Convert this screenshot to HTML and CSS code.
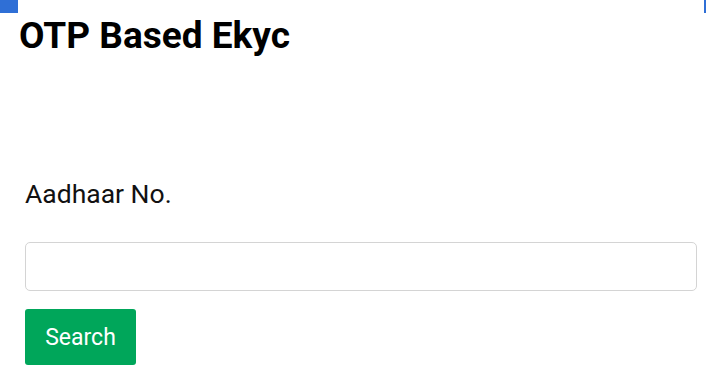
FILE: index.html
```html
<!DOCTYPE html>
<html>
<head>
<meta charset="utf-8">
<link rel="stylesheet" href="styles.css">
</head>
<body>
<span class="mark mark-left"></span>
<span class="mark mark-right"></span>
<div class="page">
  <h1 class="title">OTP Based Ekyc</h1>
  <form class="form">
    <label class="label" for="aadhaar">Aadhaar No.</label>
    <input class="input" id="aadhaar" type="text">
    <button class="btn" type="button">Search</button>
  </form>
</div>
</body>
</html>
```
FILE: styles.css
```css
html, body {
  margin: 0;
  padding: 0;
  background: #fff;
}
body {
  font-family: Roboto, "Liberation Sans", sans-serif;
  color: #000;
  position: relative;
  width: 706px;
  height: 382px;
  overflow: hidden;
}
.mark {
  position: absolute;
  top: 0;
  height: 13px;
  background: #2f6fd6;
}
.mark-left { left: 0; width: 18px; }
.mark-right { right: 0; width: 2px; }
.page {
  padding: 14px 9px 0 19px;
}
.title {
  margin: 0;
  font-size: 37px;
  font-weight: 700;
  line-height: 44px;
}
.form {
  display: flex;
  flex-direction: column;
  align-items: flex-start;
  padding: 120px 0 0 6px;
}
.label {
  font-size: 26.5px;
  line-height: 32px;
  color: #111;
}
.input {
  box-sizing: border-box;
  width: 672px;
  height: 49px;
  margin-top: 32px;
  border: 1px solid #d4d4d4;
  border-radius: 5px;
  background: #fff;
  outline: none;
}
.btn {
  margin-top: 18px;
  width: 111px;
  height: 56px;
  border: none;
  border-radius: 3px;
  background: #00a65a;
  color: #fff;
  font-family: Roboto, "Liberation Sans", sans-serif;
  font-size: 23px;
  padding: 0;
}
```
